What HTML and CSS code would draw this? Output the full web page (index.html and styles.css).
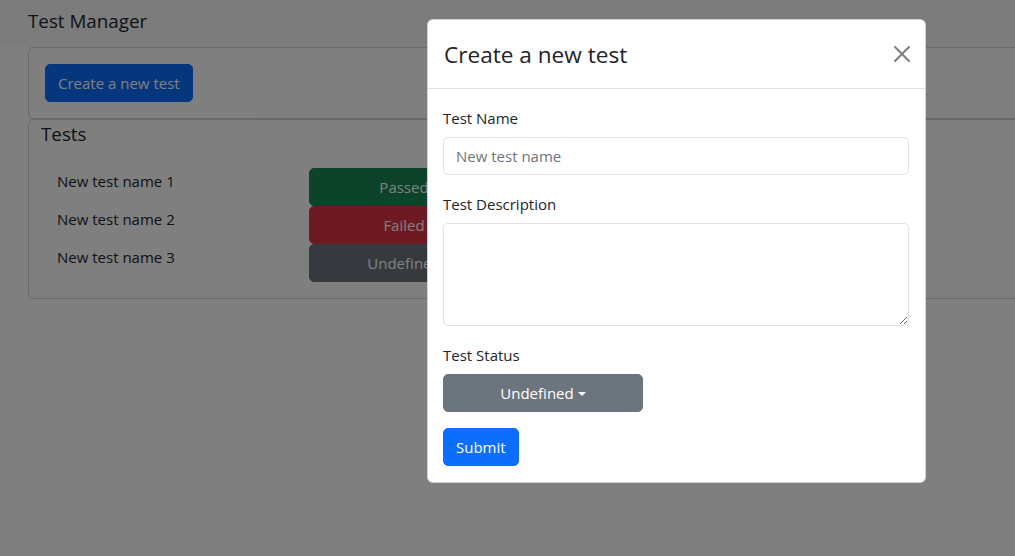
FILE: index.html
```html
<!DOCTYPE html>
<html lang="en">
<head>
<meta charset="utf-8">
<title>Test Manager</title>
<link rel="stylesheet" href="styles.css">
</head>
<body>
<div class="page">
  <nav class="navbar"><span class="brand">Test Manager</span></nav>
  <main class="content">
    <section class="card card-actions">
      <button class="btn btn-primary" type="button">Create a new test</button>
    </section>
    <section class="card card-tests">
      <h5 class="card-title">Tests</h5>
      <ul class="test-list">
        <li class="test-row"><span class="test-name">New test name 1</span><button class="btn status status-passed" type="button">Passed</button></li>
        <li class="test-row"><span class="test-name">New test name 2</span><button class="btn status status-failed" type="button">Failed</button></li>
        <li class="test-row"><span class="test-name">New test name 3</span><button class="btn status status-undefined" type="button">Undefined</button></li>
      </ul>
    </section>
  </main>
  <div class="backdrop">
    <div class="modal">
      <div class="modal-header">
        <h4 class="modal-title">Create a new test</h4>
        <button class="btn-close" type="button" aria-label="Close">
          <svg viewBox="0 0 16 16" width="16" height="16"><path d="M.293.293a1 1 0 0 1 1.414 0L8 6.586 14.293.293a1 1 0 1 1 1.414 1.414L9.414 8l6.293 6.293a1 1 0 0 1-1.414 1.414L8 9.414l-6.293 6.293a1 1 0 0 1-1.414-1.414L6.586 8 .293 1.707a1 1 0 0 1 0-1.414z"/></svg>
        </button>
      </div>
      <form class="modal-body">
        <div class="field">
          <label class="form-label">Test Name</label>
          <input class="form-control" type="text" placeholder="New test name">
        </div>
        <div class="field">
          <label class="form-label">Test Description</label>
          <textarea class="form-control form-textarea"></textarea>
        </div>
        <div class="field">
          <label class="form-label">Test Status</label>
          <button class="btn btn-secondary dropdown-toggle" type="button">Undefined<span class="caret"></span></button>
        </div>
        <button class="btn btn-primary btn-submit" type="button">Submit</button>
      </form>
    </div>
  </div>
</div>
</body>
</html>
```
FILE: styles.css
```css
html, body {
  margin: 0;
  padding: 0;
  overflow: hidden;
  background: #fff;
}
body {
  font-family: "Open Sans", "Noto Sans", sans-serif;
  font-size: 15px;
  line-height: 24px;
  color: #212529;
}
.page {
  position: relative;
  height: 556px;
  overflow: hidden;
}
.navbar {
  height: 46px;
  box-sizing: border-box;
  padding: 6px 28px 0;
  background: #f8f9fa;
}
.brand {
  display: block;
  font-size: 18.8px;
  line-height: 30px;
  color: #212529;
}
.content {
  padding: 1px 0 0 28px;
}
/* cards continue past the right edge of the visible window */
.card {
  border: 1px solid rgba(0, 0, 0, 0.175);
  border-right: 0;
  border-radius: 5px 0 0 5px;
  background: #fff;
}
.card-actions {
  padding: 16px;
}
.card-tests {
  padding: 2px 12px 16px;
}
.card-title {
  margin: 0;
  font-size: 18.8px;
  line-height: 24px;
  font-weight: 400;
}
.test-list {
  list-style: none;
  margin: 22px 0 0;
  padding: 0 0 0 16px;
}
.test-row {
  display: flex;
  align-items: flex-start;
}
.test-name {
  width: 252px;
  padding-top: 1px;
}
.btn {
  font-family: inherit;
  font-size: 15px;
  line-height: 24px;
  padding: 6px 12px;
  border: 1px solid transparent;
  border-radius: 5px;
  color: #fff;
  cursor: pointer;
  display: inline-block;
}
.btn-primary {
  background: #0d6efd;
  border-color: #0d6efd;
}
.btn-secondary {
  background: #6c757d;
  border-color: #6c757d;
}
.status {
  width: 190px;
  text-align: center;
}
.status-passed { background: #198754; border-color: #198754; }
.status-failed { background: #dc3545; border-color: #dc3545; }
.status-undefined { background: #6c757d; border-color: #6c757d; }

/* overlay: the dialog is centred in the original, wider window */
.backdrop {
  position: absolute;
  inset: 0;
  background: rgba(0, 0, 0, 0.5);
}
.modal {
  position: absolute;
  left: 427px;
  top: 19px;
  width: 499px;
  box-sizing: border-box;
  background: #fff;
  border: 1px solid rgba(0, 0, 0, 0.175);
  border-radius: 6px;
}
.modal-header {
  display: flex;
  align-items: center;
  justify-content: space-between;
  padding: 16px 15px 16px 16px;
  border-bottom: 1px solid #dee2e6;
}
.modal-title {
  margin: 0;
  padding-top: 2px;
  font-size: 22.6px;
  line-height: 34px;
  font-weight: 400;
}
.btn-close {
  width: 16px;
  height: 16px;
  padding: 0;
  border: 0;
  background: transparent;
  opacity: 0.5;
  display: flex;
  cursor: pointer;
}
.btn-close svg {
  fill: #000;
}
.modal-body {
  margin: 0;
  padding: 16px 16px 16px 15px;
}
.field {
  margin-bottom: 16px;
}
.form-label {
  display: block;
  padding-top: 1px;
  margin-bottom: 7px;
}
.form-control {
  display: block;
  width: 100%;
  box-sizing: border-box;
  height: 38px;
  padding: 6px 12px;
  font-family: inherit;
  font-size: 15px;
  line-height: 24px;
  color: #212529;
  border: 1px solid #dee2e6;
  border-radius: 5px;
  background: #fff;
  margin: 0;
}
.form-control::placeholder {
  color: #6c757d;
}
.form-textarea {
  height: 103px;
  resize: vertical;
}
.dropdown-toggle {
  width: 200px;
  text-align: center;
}
.caret {
  display: inline-block;
  margin-left: 4px;
  vertical-align: 3px;
  border-top: 4.8px solid #fff;
  border-left: 4.8px solid transparent;
  border-right: 4.8px solid transparent;
}
.btn-submit {
  display: block;
}
```
